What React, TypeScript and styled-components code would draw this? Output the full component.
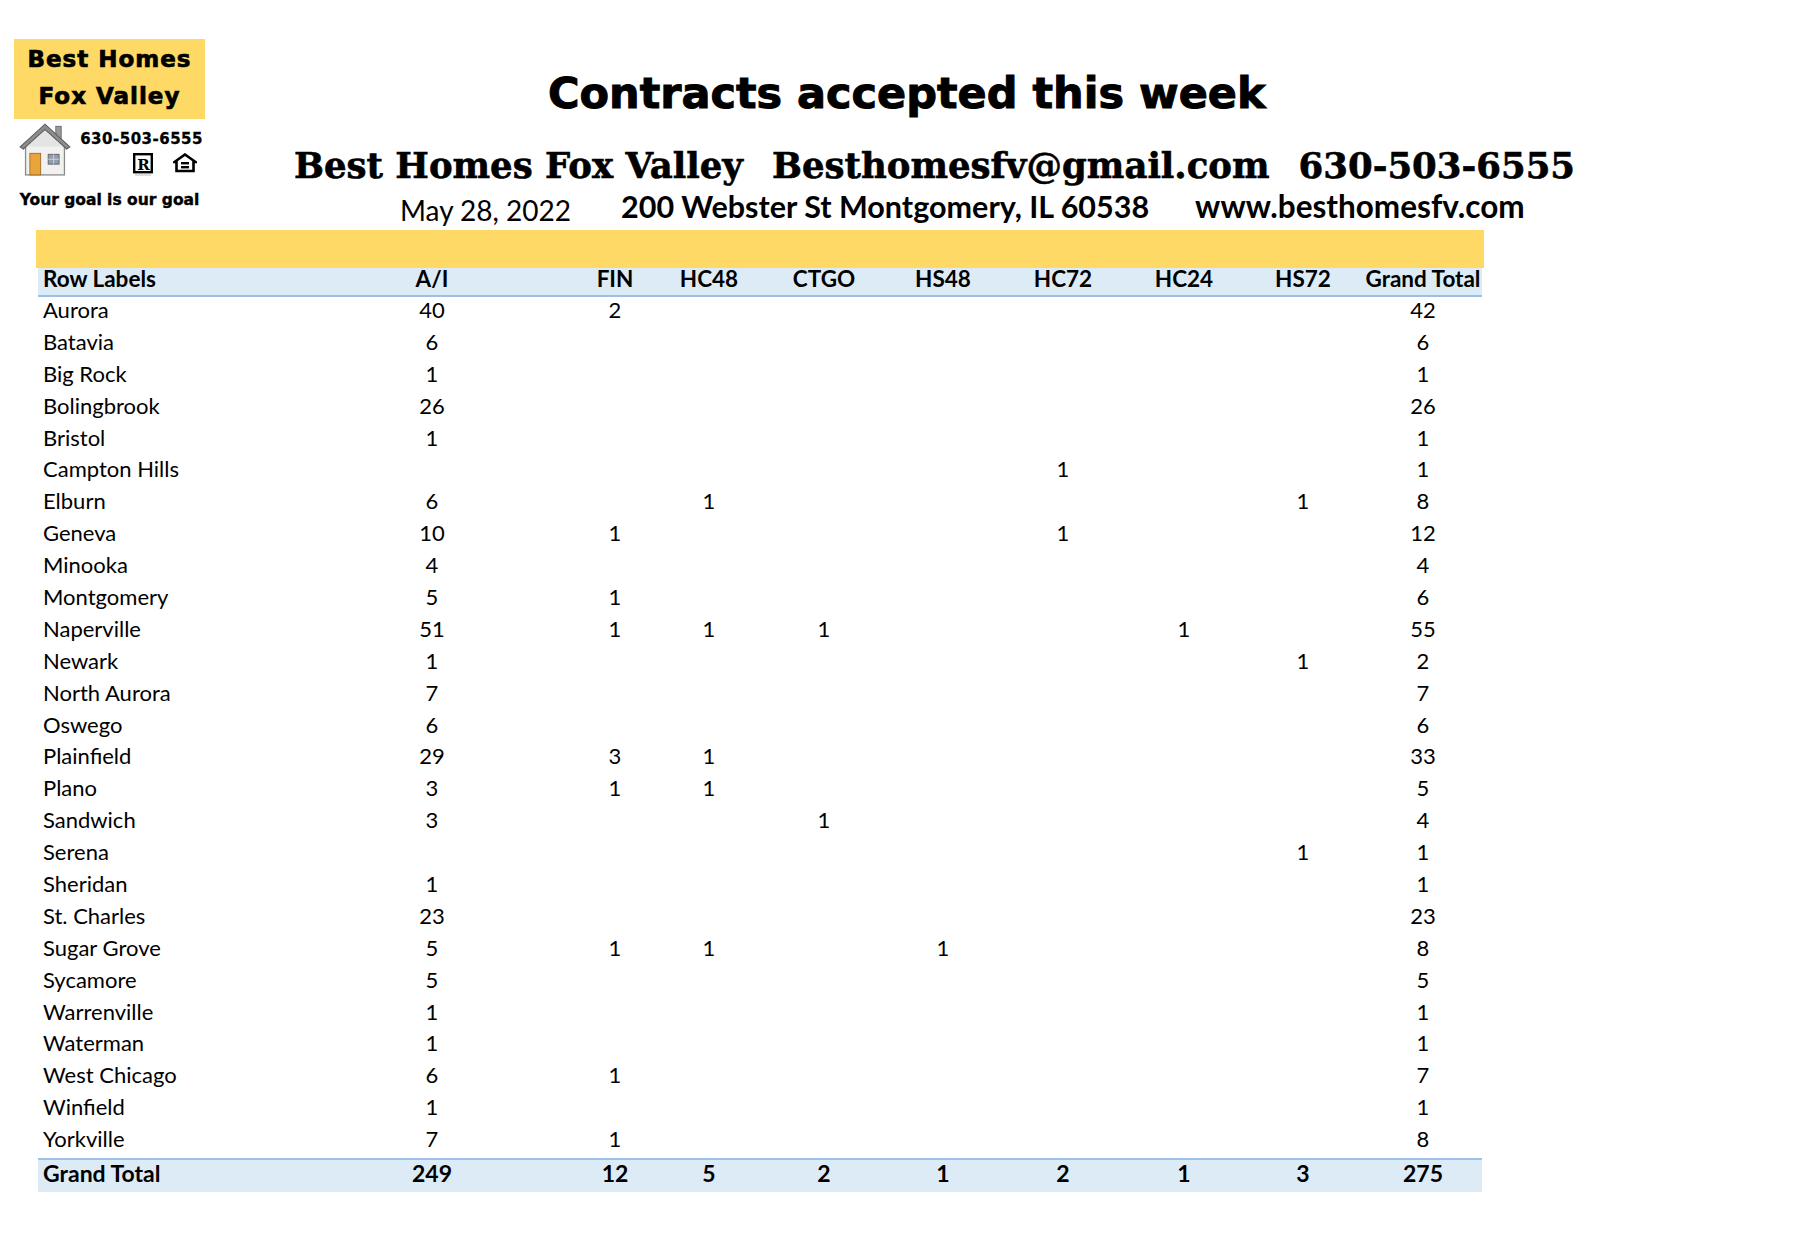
import React from "react";
import styled, { createGlobalStyle } from "styled-components";

const GlobalStyle = createGlobalStyle`
  html, body {
    margin: 0;
    padding: 0;
    background: #fff;
  }
  body {
    font-family: Lato, "Open Sans", sans-serif;
    color: #000;
  }
`;

type Column = { key: string; label: string; center: number; width: number };

// centres are measured from the left edge of the table
const LABEL_WIDTH = 354;
const COLUMNS: Column[] = [
  { key: "ai", label: "A/I", center: 394, width: 80 },
  { key: "fin", label: "FIN", center: 577, width: 80 },
  { key: "hc48", label: "HC48", center: 671, width: 80 },
  { key: "ctgo", label: "CTGO", center: 786, width: 80 },
  { key: "hs48", label: "HS48", center: 905, width: 80 },
  { key: "hc72", label: "HC72", center: 1025, width: 80 },
  { key: "hc24", label: "HC24", center: 1146, width: 80 },
  { key: "hs72", label: "HS72", center: 1265, width: 80 },
  { key: "total", label: "Grand Total", center: 1385, width: 118 },
];

const buildTemplate = () => {
  const tracks = [`${LABEL_WIDTH}px`];
  let edge = LABEL_WIDTH;
  COLUMNS.forEach((c) => {
    const start = c.center - c.width / 2;
    tracks.push(`${Math.max(0, start - edge)}px`);
    tracks.push(`${c.width}px`);
    edge = start + c.width;
  });
  return tracks.join(" ");
};
const TEMPLATE = buildTemplate();

type Row = { name: string; values: Partial<Record<string, number>> };

const ROWS: Row[] = [
  { name: "Aurora", values: { ai: 40, fin: 2, total: 42 } },
  { name: "Batavia", values: { ai: 6, total: 6 } },
  { name: "Big Rock", values: { ai: 1, total: 1 } },
  { name: "Bolingbrook", values: { ai: 26, total: 26 } },
  { name: "Bristol", values: { ai: 1, total: 1 } },
  { name: "Campton Hills", values: { hc72: 1, total: 1 } },
  { name: "Elburn", values: { ai: 6, hc48: 1, hs72: 1, total: 8 } },
  { name: "Geneva", values: { ai: 10, fin: 1, hc72: 1, total: 12 } },
  { name: "Minooka", values: { ai: 4, total: 4 } },
  { name: "Montgomery", values: { ai: 5, fin: 1, total: 6 } },
  { name: "Naperville", values: { ai: 51, fin: 1, hc48: 1, ctgo: 1, hc24: 1, total: 55 } },
  { name: "Newark", values: { ai: 1, hs72: 1, total: 2 } },
  { name: "North Aurora", values: { ai: 7, total: 7 } },
  { name: "Oswego", values: { ai: 6, total: 6 } },
  { name: "Plainfield", values: { ai: 29, fin: 3, hc48: 1, total: 33 } },
  { name: "Plano", values: { ai: 3, fin: 1, hc48: 1, total: 5 } },
  { name: "Sandwich", values: { ai: 3, ctgo: 1, total: 4 } },
  { name: "Serena", values: { hs72: 1, total: 1 } },
  { name: "Sheridan", values: { ai: 1, total: 1 } },
  { name: "St. Charles", values: { ai: 23, total: 23 } },
  { name: "Sugar Grove", values: { ai: 5, fin: 1, hc48: 1, hs48: 1, total: 8 } },
  { name: "Sycamore", values: { ai: 5, total: 5 } },
  { name: "Warrenville", values: { ai: 1, total: 1 } },
  { name: "Waterman", values: { ai: 1, total: 1 } },
  { name: "West Chicago", values: { ai: 6, fin: 1, total: 7 } },
  { name: "Winfield", values: { ai: 1, total: 1 } },
  { name: "Yorkville", values: { ai: 7, fin: 1, total: 8 } },
];

const TOTALS: Record<string, number> = {
  ai: 249,
  fin: 12,
  hc48: 5,
  ctgo: 2,
  hs48: 1,
  hc72: 2,
  hc24: 1,
  hs72: 3,
  total: 275,
};

const Page = styled.div`
  width: 1800px;
  height: 1260px;
  background: #fff;
  overflow: hidden;
`;

const Masthead = styled.header`
  display: flex;
  align-items: flex-start;
  height: 230px;
  padding-left: 14px;
  box-sizing: border-box;
`;

/* ---------- logo ---------- */

const Logo = styled.div`
  width: 191px;
  margin-top: 39px;
  display: flex;
  flex-direction: column;
  font-family: "DejaVu Sans", sans-serif;
  font-weight: 700;
`;

const LogoPlate = styled.div`
  height: 80px;
  box-sizing: border-box;
  padding-top: 2px;
  background: #ffd966;
  text-align: center;
  font-size: 23px;
  line-height: 37px;
  letter-spacing: 1px;
  -webkit-text-stroke: 0.7px #000;
`;

const Emblem = styled.div`
  display: flex;
  height: 56px;
  margin-top: 2px;
`;

const HouseMark = styled.svg`
  margin: 1px 0 0 5px;
  flex: none;
`;

const EmblemSide = styled.div`
  margin-left: auto;
  padding-right: 2px;
  display: flex;
  flex-direction: column;
  align-items: flex-end;
`;

const LogoPhone = styled.div`
  margin-top: 10px;
  font-size: 15px;
  line-height: 16px;
  letter-spacing: 0.5px;
  -webkit-text-stroke: 0.3px #000;
`;

const Badges = styled.div`
  display: flex;
  align-items: flex-start;
  gap: 20px;
  margin-top: 6px;
  padding-right: 6px;
`;

const Tagline = styled.div`
  margin-top: 15px;
  text-align: center;
  font-size: 15.5px;
  line-height: 16px;
  -webkit-text-stroke: 0.4px #000;
`;

/* ---------- headlines ---------- */

const Headlines = styled.div`
  display: flex;
  flex-direction: column;
  margin-top: 69px;
  white-space: nowrap;
`;

const Title = styled.h1`
  margin: 0;
  padding-left: 343px;
  font-family: "DejaVu Sans", sans-serif;
  font-weight: 700;
  font-size: 43px;
  line-height: 48px;
  -webkit-text-stroke: 1px #000;
`;

const ContactLine = styled.div`
  display: flex;
  gap: 29px;
  margin-top: 29px;
  padding-left: 89px;
  font-family: "DejaVu Serif", serif;
  font-weight: 700;
  font-size: 35.5px;
  line-height: 40px;
  -webkit-text-stroke: 0.6px #000;
`;

const AddressLine = styled.div`
  display: flex;
  align-items: flex-start;
  margin-top: 3px;
  padding-left: 195px;
  font-family: Lato, sans-serif;
  line-height: 34px;
`;

const AddressPart = styled.span<{ $drop?: number; $gap?: number; $size: number; $bold?: boolean }>`
  margin-top: ${(p) => p.$drop ?? 0}px;
  margin-left: ${(p) => p.$gap ?? 0}px;
  font-size: ${(p) => p.$size}px;
  font-weight: ${(p) => (p.$bold ? 700 : 400)};
`;

/* ---------- pivot table ---------- */

const Sheet = styled.section`
  width: 1448px;
  margin-left: 36px;
`;

const Band = styled.div`
  height: 38px;
  background: #ffd966;
`;

const Table = styled.div`
  width: 1444px;
  margin: 0 2px;
  font-family: Lato, sans-serif;
  font-size: 22px;
`;

const GridRow = styled.div`
  display: grid;
  grid-template-columns: ${TEMPLATE};
  align-items: start;
  height: 31.9px;
`;

const HeadRow = styled(GridRow)`
  height: 27px;
  background: #ddebf7;
  border-bottom: 2px solid #9bc2e6;
  font-weight: 700;
  font-size: 22.5px;
`;

const TotalRow = styled(GridRow)`
  height: 32px;
  background: #ddebf7;
  border-top: 2px solid #9bc2e6;
  font-weight: 700;
  font-size: 23px;
`;

const Cell = styled.div<{ $col: number; $head?: boolean }>`
  grid-column: ${(p) => p.$col};
  grid-row: 1;
  text-align: center;
  line-height: ${(p) => (p.$head ? 22 : 26)}px;
  white-space: nowrap;
`;

const LabelCell = styled(Cell)`
  padding-left: 5px;
  text-align: left;
`;

const colOf = (i: number) => 3 + i * 2;

const House = () => (
  <HouseMark width="52" height="54" viewBox="0 0 48 50">
    <rect x="34" y="4" width="5" height="12" fill="#9a9a9a" stroke="#666" strokeWidth="0.8" />
    <rect x="6" y="20" width="36" height="29" fill="#f1f1f1" stroke="#8a8a8a" strokeWidth="1.2" />
    <path d="M1 23 L24 2 L47 23 L44 25 L24 7 L4 25 Z" fill="#8d8d8d" stroke="#5e5e5e" strokeWidth="1" />
    <path d="M7 23 L24 8 L41 23 Z" fill="#e4e4e4" />
    <rect x="10" y="29" width="10" height="20" fill="#e9a53b" stroke="#9b6a1c" strokeWidth="0.8" />
    <rect x="27" y="30" width="10" height="9" fill="#8f9fb0" stroke="#6e6e6e" strokeWidth="1" />
    <path d="M32 30 V39 M27 34.5 H37" stroke="#d8d8d8" strokeWidth="0.8" />
  </HouseMark>
);

const RealtorMark = () => (
  <svg width="20" height="24" viewBox="0 0 20 24">
    <rect x="1.2" y="1.2" width="17.6" height="18" fill="#fff" stroke="#000" strokeWidth="2.4" />
    <text x="10.5" y="16.5" textAnchor="middle" fontFamily="DejaVu Serif, serif" fontWeight="700" fontSize="15">
      R
    </text>
    <rect x="2" y="21.5" width="16" height="1" fill="#bbb" />
  </svg>
);

const HousingMark = () => (
  <svg width="24" height="20" viewBox="0 0 24 20">
    <path d="M12 1.5 L22.5 9 L20.5 9 L20.5 18 L3.5 18 L3.5 9 L1.5 9 Z" fill="none" stroke="#000" strokeWidth="2.6" strokeLinejoin="miter" />
    <rect x="8" y="9" width="8" height="2.4" fill="#000" />
    <rect x="8" y="13" width="8" height="2.4" fill="#000" />
  </svg>
);

const App = () => (
  <Page>
    <GlobalStyle />
    <Masthead>
      <Logo>
        <LogoPlate>
          Best Homes
          <br />
          Fox Valley
        </LogoPlate>
        <Emblem>
          <House />
          <EmblemSide>
            <LogoPhone>630-503-6555</LogoPhone>
            <Badges>
              <RealtorMark />
              <HousingMark />
            </Badges>
          </EmblemSide>
        </Emblem>
        <Tagline>Your goal is our goal</Tagline>
      </Logo>
      <Headlines>
        <Title>Contracts accepted this week</Title>
        <ContactLine>
          <span>Best Homes Fox Valley</span>
          <span>Besthomesfv@gmail.com</span>
          <span>630-503-6555</span>
        </ContactLine>
        <AddressLine>
          <AddressPart $drop={4} $size={28}>
            May 28, 2022
          </AddressPart>
          <AddressPart $gap={50} $size={30.5} $bold>
            200 Webster St Montgomery, IL 60538
          </AddressPart>
          <AddressPart $gap={46} $size={31.5} $bold>
            www.besthomesfv.com
          </AddressPart>
        </AddressLine>
      </Headlines>
    </Masthead>

    <Sheet>
      <Band />
      <Table>
        <HeadRow>
          <LabelCell $col={1} $head>
            Row Labels
          </LabelCell>
          {COLUMNS.map((c, i) => (
            <Cell key={c.key} $col={colOf(i)} $head>
              {c.label}
            </Cell>
          ))}
        </HeadRow>
        {ROWS.map((r) => (
          <GridRow key={r.name}>
            <LabelCell $col={1}>{r.name}</LabelCell>
            {COLUMNS.map((c, i) =>
              r.values[c.key] !== undefined ? (
                <Cell key={c.key} $col={colOf(i)}>
                  {r.values[c.key]}
                </Cell>
              ) : null
            )}
          </GridRow>
        ))}
        <TotalRow>
          <LabelCell $col={1}>Grand Total</LabelCell>
          {COLUMNS.map((c, i) => (
            <Cell key={c.key} $col={colOf(i)}>
              {TOTALS[c.key]}
            </Cell>
          ))}
        </TotalRow>
      </Table>
    </Sheet>
  </Page>
);

export default App;
